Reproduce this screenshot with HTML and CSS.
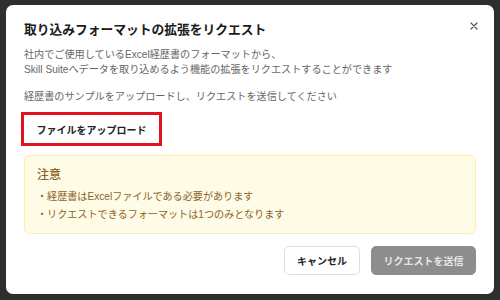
FILE: index.html
```html
<!DOCTYPE html>
<html lang="ja">
<head>
<meta charset="utf-8">
<link rel="stylesheet" href="styles.css">
</head>
<body>
<div class="modal">
  <div class="header">
    <h1 class="title">取り込みフォーマットの拡張をリクエスト</h1>
    <button class="close" aria-label="閉じる">
      <svg width="8" height="8" viewBox="0 0 8 8"><path d="M1 1L7 7M7 1L1 7" stroke="#555" stroke-width="1.2" stroke-linecap="round"/></svg>
    </button>
  </div>
  <p class="desc">社内でご使用しているExcel経歴書のフォーマットから、<br>Skill Suiteへデータを取り込めるよう機能の拡張をリクエストすることができます</p>
  <p class="desc desc2">経歴書のサンプルをアップロードし、リクエストを送信してください</p>
  <div class="upload-row"><button class="upload">ファイルをアップロード</button></div>
  <div class="notice">
    <div class="notice-title">注意</div>
    <ul class="notice-list">
      <li>・経歴書はExcelファイルである必要があります</li>
      <li>・リクエストできるフォーマットは1つのみとなります</li>
    </ul>
  </div>
  <div class="footer">
    <button class="btn cancel">キャンセル</button>
    <button class="btn submit">リクエストを送信</button>
  </div>
</div>
</body>
</html>
```

FILE: styles.css
```css
html, body {
  margin: 0;
  padding: 0;
}
body {
  width: 500px;
  height: 300px;
  background: #2e2e2e;
  padding: 5px 6px;
  box-sizing: border-box;
  font-family: "Liberation Sans", "Noto Sans CJK JP", sans-serif;
  overflow: hidden;
}
.modal {
  width: 488px;
  height: 289px;
  box-sizing: border-box;
  background: #fff;
  border-radius: 7px;
  padding: 16px 18px 0 18px;
  display: flex;
  flex-direction: column;
}
.header {
  display: flex;
  justify-content: space-between;
  align-items: flex-start;
}
.title {
  margin: 0;
  font-size: 12.75px;
  line-height: 18px;
  font-weight: 700;
  color: #1a1a1a;
}
.close {
  border: 0;
  background: none;
  padding: 0;
  margin: 0 -3px 0 0;
  width: 10px;
  height: 10px;
  display: flex;
  align-items: center;
  justify-content: center;
}
.desc {
  margin: 8px 0 0 0;
  font-size: 10.15px;
  line-height: 15px;
  color: #666;
}
.desc2 {
  margin-top: 12px;
}
.upload-row {
  display: flex;
  margin-top: 8px;
}
.upload {
  margin-left: -3px;
  width: 141px;
  height: 34px;
  box-sizing: border-box;
  border: 3px solid #e3131e;
  background: #fff;
  font-family: inherit;
  font-size: 10px;
  font-weight: 700;
  color: #222;
  padding: 0;
}
.notice {
  margin-top: 9px;
  height: 79px;
  box-sizing: border-box;
  background: #fefbe7;
  border: 1px solid #fcf0a6;
  border-radius: 6px;
  padding: 10px 12px;
  color: #8a6326;
}
.notice-title {
  font-size: 12px;
  line-height: 18px;
  font-weight: 500;
}
.notice-list {
  list-style: none;
  margin: 4px 0 0 0;
  padding: 0;
  font-size: 10.1px;
  line-height: 18px;
}
.footer {
  display: flex;
  justify-content: flex-end;
  gap: 11px;
  margin-top: 12px;
}
.btn {
  height: 29px;
  box-sizing: border-box;
  border-radius: 5px;
  font-family: inherit;
  font-size: 10px;
  font-weight: 700;
  padding: 0;
}
.cancel {
  width: 76px;
  background: #fff;
  border: 1px solid #dedede;
  color: #222;
}
.submit {
  width: 105px;
  background: #8d8d8d;
  border: 1px solid #8d8d8d;
  color: #e6e6e6;
}
```
